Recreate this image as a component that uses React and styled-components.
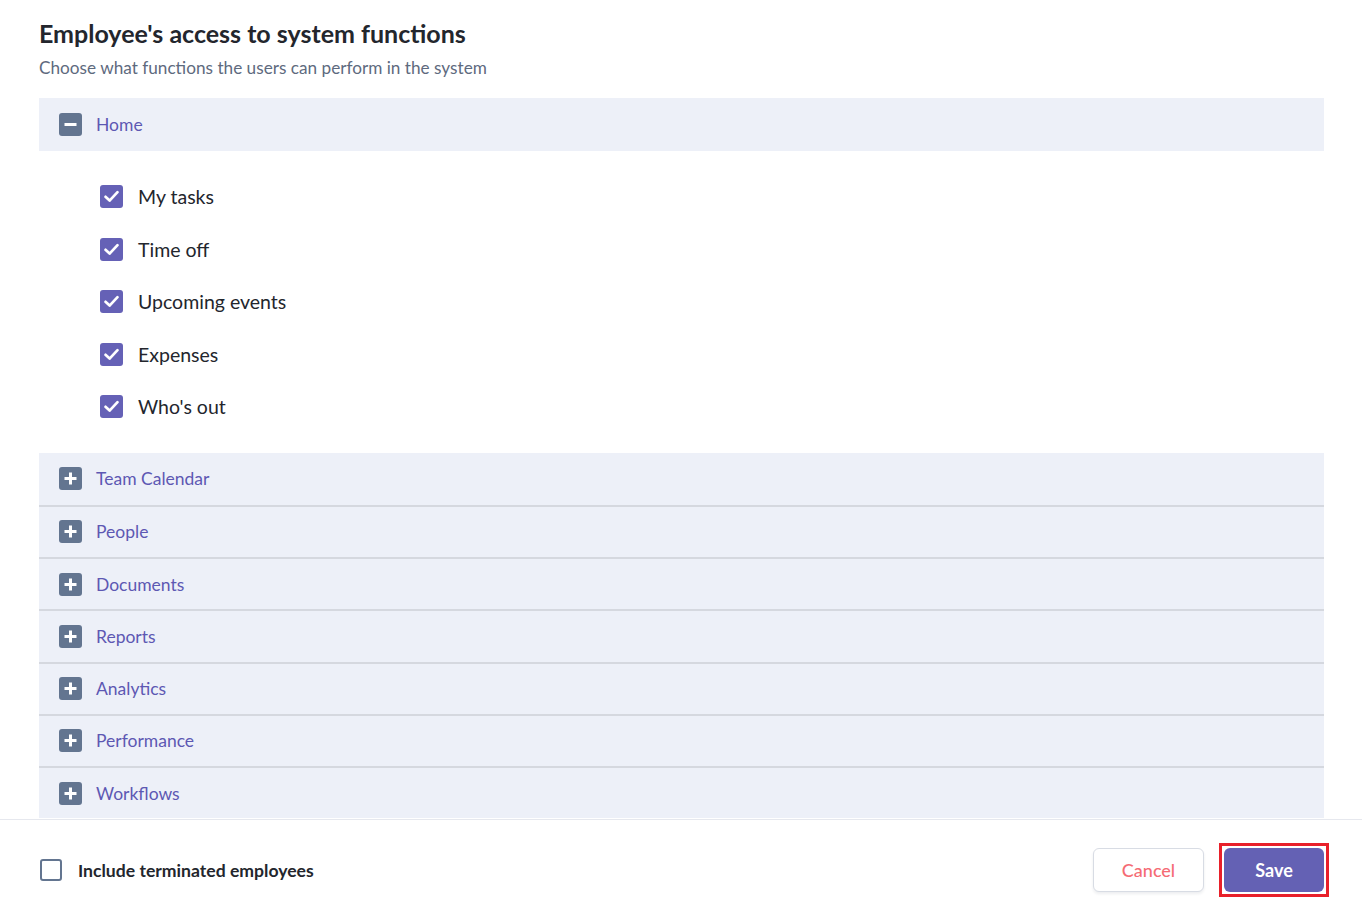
import React, { useState } from "react";
import styled, { createGlobalStyle } from "styled-components";

const GlobalStyle = createGlobalStyle`
  body {
    margin: 0;
    background: #fff;
    font-family: Lato, "Open Sans", sans-serif;
    color: #23262d;
  }
`;

const Page = styled.div`
  display: flex;
  flex-direction: column;
  min-height: 920px;
`;

const Main = styled.div`
  padding: 17px 38px 0 39px;
`;

const Title = styled.h1`
  margin: 0;
  font-size: 25px;
  line-height: 32px;
  font-weight: 700;
  color: #23262d;
`;

const Subtitle = styled.p`
  margin: 8px 0 19px;
  font-size: 17.2px;
  line-height: 22px;
  color: #5e6a7e;
`;

const Section = styled.div`
  display: flex;
  flex-direction: column;
`;

const GroupRow = styled.div`
  display: flex;
  align-items: center;
  gap: 14px;
  box-sizing: border-box;
  height: ${(p) => (p.$first ? "53px" : "52.28px")};
  padding-left: 20px;
  background: #edf0f8;
  border-top: ${(p) => (p.$divider ? "2px solid #d5d8df" : "none")};
  cursor: pointer;
`;

const ToggleBox = styled.span`
  width: 23px;
  height: 23px;
  border-radius: 3px;
  background: #637590;
  display: flex;
  align-items: center;
  justify-content: center;
  flex: none;
`;

const GroupLabel = styled.span`
  font-size: 17.5px;
  color: #5d58b3;
`;

const Items = styled.div`
  display: flex;
  flex-direction: column;
  padding: 19.5px 0 19.5px 61px;
`;

const Item = styled.label`
  display: flex;
  align-items: center;
  gap: 15px;
  height: 52.5px;
  font-size: 19.5px;
  color: #23262d;
  cursor: pointer;
`;

const CheckBox = styled.span`
  width: ${(p) => p.$size || 23}px;
  height: ${(p) => p.$size || 23}px;
  box-sizing: border-box;
  border-radius: 3px;
  flex: none;
  display: flex;
  align-items: center;
  justify-content: center;
  background: ${(p) => (p.$checked ? "#6561b6" : "#fff")};
  border: ${(p) => (p.$checked ? "none" : "2px solid #637590")};
`;

const Footer = styled.div`
  margin-top: auto;
  height: 101px;
  box-sizing: border-box;
  border-top: 1px solid #e6e8ee;
  display: flex;
  align-items: center;
  justify-content: space-between;
  padding: 0 33px 0 40px;
`;

const FooterCheck = styled.label`
  display: flex;
  align-items: center;
  gap: 16px;
  font-size: 17.6px;
  font-weight: 700;
  color: #23262d;
  cursor: pointer;
`;

const Actions = styled.div`
  display: flex;
  align-items: center;
  gap: 15px;
`;

const FocusRing = styled.span`
  display: flex;
  padding: 2px;
  border: 3px solid #e8202a;
`;

const Button = styled.button`
  height: 44px;
  border-radius: 6px;
  font-family: Lato, "Open Sans", sans-serif;
  font-size: 18px;
  cursor: pointer;
  ${(p) =>
    p.$primary
      ? `
    width: 100px;
    background: #6461b4;
    color: #fff;
    font-weight: 700;
    border: none;
    outline: none;
  `
      : `
    width: 111px;
    background: #fff;
    color: #f56b74;
    font-weight: 500;
    border: 1px solid #d8dce4;
    box-shadow: 0 2px 3px rgba(30, 40, 70, 0.08);
  `}
`;

const Minus = () => (
  <svg width="13" height="13" viewBox="0 0 13 13">
    <rect x="0.5" y="5" width="12" height="3" fill="#fff" />
  </svg>
);

const Plus = () => (
  <svg width="13" height="13" viewBox="0 0 13 13">
    <rect x="0.5" y="5" width="12" height="3" fill="#fff" />
    <rect x="5" y="0.5" width="3" height="12" fill="#fff" />
  </svg>
);

const Check = () => (
  <svg width="17" height="17" viewBox="0 0 17 17">
    <path
      d="M2.5 8.8 L6.6 12.6 L14.5 4.2"
      fill="none"
      stroke="#fff"
      strokeWidth="2.7"
      strokeLinecap="round"
      strokeLinejoin="round"
    />
  </svg>
);

const homeItems = ["My tasks", "Time off", "Upcoming events", "Expenses", "Who's out"];
const groups = ["Team Calendar", "People", "Documents", "Reports", "Analytics", "Performance", "Workflows"];

export default function App() {
  const [includeTerminated, setIncludeTerminated] = useState(false);

  return (
    <Page>
      <GlobalStyle />
      <Main>
        <Title>Employee's access to system functions</Title>
        <Subtitle>Choose what functions the users can perform in the system</Subtitle>
        <Section>
          <GroupRow $first>
            <ToggleBox>
              <Minus />
            </ToggleBox>
            <GroupLabel>Home</GroupLabel>
          </GroupRow>
          <Items>
            {homeItems.map((name) => (
              <Item key={name}>
                <CheckBox $checked>
                  <Check />
                </CheckBox>
                {name}
              </Item>
            ))}
          </Items>
          {groups.map((name, i) => (
            <GroupRow key={name} $divider={i > 0}>
              <ToggleBox>
                <Plus />
              </ToggleBox>
              <GroupLabel>{name}</GroupLabel>
            </GroupRow>
          ))}
        </Section>
      </Main>
      <Footer>
        <FooterCheck onClick={() => setIncludeTerminated(!includeTerminated)}>
          <CheckBox $size={22} $checked={includeTerminated}>
            {includeTerminated && <Check />}
          </CheckBox>
          Include terminated employees
        </FooterCheck>
        <Actions>
          <Button>Cancel</Button>
          <FocusRing>
            <Button $primary>Save</Button>
          </FocusRing>
        </Actions>
      </Footer>
    </Page>
  );
}
